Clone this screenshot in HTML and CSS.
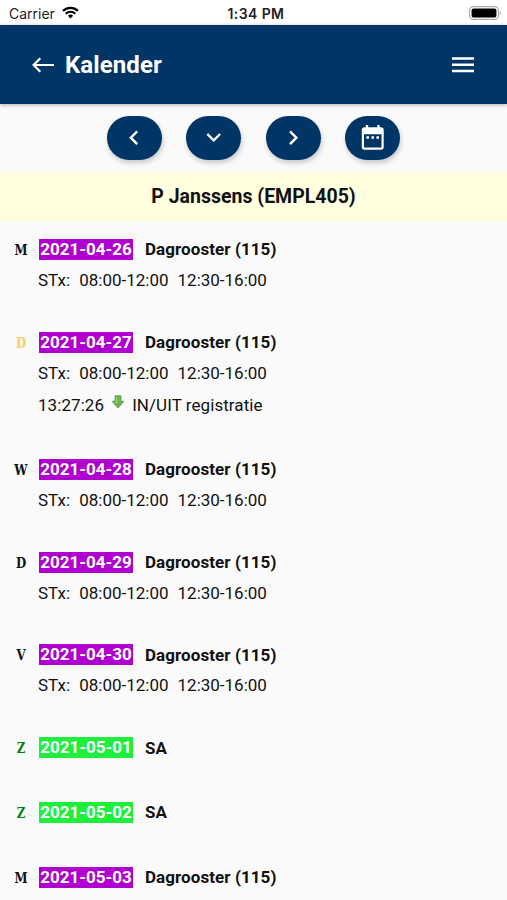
FILE: index.html
```
<!DOCTYPE html>
<html lang="nl">
<head>
    <meta charset="UTF-8">
    <meta name="viewport" content="width=device-width, initial-scale=1.0">
    <title>Kalender</title>
    <link rel="stylesheet" href="styles.css">
</head>
<body>
    <div class="status-bar">
        <div class="carrier">
            <span>Carrier</span>
            <svg class="wifi" viewBox="0 0 17 13" width="17" height="13">
                <path d="M1 4.9a10.8 10.8 0 0 1 15 0M3.7 7.7a6.9 6.9 0 0 1 9.6 0" fill="none" stroke="#000" stroke-width="2.2"/>
                <path d="M8.5 12.6 5.9 9.8a3.8 3.8 0 0 1 5.2 0z"/>
            </svg>
        </div>
        <div class="time">1:34 PM</div>
        <div class="power">
            <svg viewBox="0 0 32 14" width="32" height="14">
                <rect x=".6" y=".6" width="28.8" height="12.8" rx="3.8" fill="#fff" stroke="#aaa" stroke-width="1.1"/>
                <rect x="2.6" y="2.5" width="24.8" height="9" rx="1.8"/>
                <path d="M30.6 5v4q1.2-.7 1.2-2t-1.2-2z" fill="#aaa"/>
            </svg>
        </div>
    </div>

    <header class="toolbar">
        <svg class="back" viewBox="0 0 22 16" width="22" height="16">
            <path d="M22 8H1.6M8.3 1.3 1.6 8l6.7 6.7" fill="none" stroke="#fff" stroke-width="2.2"/>
        </svg>
        <h1>Kalender</h1>
        <svg class="menu" viewBox="0 0 22 16" width="22" height="16">
            <path d="M0 1.6h22M0 7.8h22M0 13.9h22" stroke="#fff" stroke-width="2.5"/>
        </svg>
    </header>

    <nav class="controls">
        <button>
            <svg viewBox="0 0 24 24" width="24" height="24">
                <path d="m15.2 5.3-6.4 6.4 6.4 6.4" fill="none" stroke="#fff" stroke-width="2.4"/>
            </svg>
        </button>
        <button>
            <svg viewBox="0 0 24 24" width="24" height="24">
                <path d="m5.3 8 6.4 6.4L18.1 8" fill="none" stroke="#fff" stroke-width="2.4"/>
            </svg>
        </button>
        <button>
            <svg viewBox="0 0 24 24" width="24" height="24">
                <path d="m9 5.3 6.4 6.4L9 18.1" fill="none" stroke="#fff" stroke-width="2.4"/>
            </svg>
        </button>
        <button>
            <svg viewBox="0 0 24 26" width="24" height="26">
                <path d="M1.9 8v14q0 1.7 1.7 1.7h16.3q1.7 0 1.7-1.7V8" fill="none" stroke="#fff" stroke-width="2.2"/>
                <path d="M3.6 2.2h1.2V0h2.4v2.2h9.1V0h2.4v2.2h1.2q2.8 0 2.8 2.8v4.2H.8V5q0-2.8 2.8-2.8z" fill="#fff"/>
                <path d="M5.4 11.3H8v2.5H5.4zM10.4 11.3H13v2.5h-2.6zM15.4 11.3H18v2.5h-2.6z" fill="#fff"/>
            </svg>
        </button>
    </nav>

    <h2 class="employee">P Janssens (EMPL405)</h2>

    <main class="days">
        <section class="day">
            <div class="head"><span class="letter">M</span><span class="date">2021-04-26</span><span class="roster">Dagrooster (115)</span></div>
            <div class="line"><span>STx:</span><span>08:00-12:00</span><span>12:30-16:00</span></div>
        </section>
        <section class="day today">
            <div class="head"><span class="letter">D</span><span class="date">2021-04-27</span><span class="roster">Dagrooster (115)</span></div>
            <div class="line"><span>STx:</span><span>08:00-12:00</span><span>12:30-16:00</span></div>
            <div class="line registration">
                <span>13:27:26</span>
                <svg viewBox="0 0 14 14" width="14" height="14">
                    <path d="M4 .8h6v5.5h3L7 13 1 6.3h3z" fill="#72b052" stroke="#5c963f" stroke-width=".8"/>
                    <path d="M5.5 2v6" stroke="#a3d184" stroke-width="1.3"/>
                </svg>
                <span>IN/UIT registratie</span>
            </div>
        </section>
        <section class="day">
            <div class="head"><span class="letter">W</span><span class="date">2021-04-28</span><span class="roster">Dagrooster (115)</span></div>
            <div class="line"><span>STx:</span><span>08:00-12:00</span><span>12:30-16:00</span></div>
        </section>
        <section class="day">
            <div class="head"><span class="letter">D</span><span class="date">2021-04-29</span><span class="roster">Dagrooster (115)</span></div>
            <div class="line"><span>STx:</span><span>08:00-12:00</span><span>12:30-16:00</span></div>
        </section>
        <section class="day">
            <div class="head"><span class="letter">V</span><span class="date">2021-04-30</span><span class="roster">Dagrooster (115)</span></div>
            <div class="line"><span>STx:</span><span>08:00-12:00</span><span>12:30-16:00</span></div>
        </section>
        <section class="day weekend">
            <div class="head"><span class="letter">Z</span><span class="date">2021-05-01</span><span class="roster">SA</span></div>
        </section>
        <section class="day weekend">
            <div class="head"><span class="letter">Z</span><span class="date">2021-05-02</span><span class="roster">SA</span></div>
        </section>
        <section class="day">
            <div class="head"><span class="letter">M</span><span class="date">2021-05-03</span><span class="roster">Dagrooster (115)</span></div>
        </section>
    </main>
</body>
</html>
```
FILE: styles.css
```
* {
    box-sizing: border-box;
}
body {
    margin: 0;
    height: 900px;
    overflow: hidden;
    background-color: #fafafa;
    color: #111;
    font-family: Roboto, "Liberation Sans", sans-serif;
}
svg {
    display: block;
    flex: none;
}
.status-bar {
    display: grid;
    grid-template-columns: 1fr auto 1fr;
    align-items: center;
    height: 25px;
    padding: 2px 6px 0 9px;
    background-color: #fff;
    font-family: Inter, sans-serif;
    font-size: 14px;
    color: #222;
}
.carrier {
    display: flex;
    align-items: center;
    gap: 7px;
}
.wifi {
    margin-top: -2px;
}
.time {
    padding-left: 2px;
    font-weight: 600;
    letter-spacing: 0.4px;
}
.power {
    display: flex;
    justify-content: flex-end;
    margin-top: -2px;
}
.toolbar {
    display: flex;
    align-items: center;
    height: 79px;
    padding: 0 33px 0 32px;
    background-color: #003566;
    color: #fff;
    box-shadow: 0 1px 4px rgba(0, 0, 0, 0.3);
}
.toolbar h1 {
    margin: 0 auto 0 11px;
    font-size: 24px;
    font-weight: 700;
    letter-spacing: 0.1px;
}
.controls {
    display: flex;
    justify-content: center;
    gap: 24.5px;
    height: 68px;
    padding-top: 11.5px;
}
.controls button {
    display: flex;
    align-items: center;
    justify-content: center;
    width: 55px;
    height: 44.5px;
    padding: 0;
    border: none;
    border-radius: 23px;
    background-color: #003566;
    box-shadow: 1px 3px 5px rgba(0, 0, 0, 0.2);
}
.employee {
    margin: 0;
    height: 49px;
    line-height: 49px;
    background-color: #ffffe0;
    font-size: 19.5px;
    font-weight: 700;
    text-align: center;
}
.days {
    padding: 11.9px 15px 0;
    font-size: 17px;
}
.day {
    margin-bottom: 31.8px;
}
.head {
    display: flex;
    align-items: center;
    height: 33px;
    font-weight: 700;
}
.letter {
    width: 18px;
    margin: 0 9px 0 -3px;
    font-family: "DejaVu Serif", serif;
    font-size: 15.5px;
    text-align: center;
    transform: scaleX(0.76);
}
.date {
    width: 94px;
    height: 21px;
    line-height: 21px;
    margin-right: 12px;
    background-color: #b000d0;
    color: #fff;
    text-align: center;
}
.roster {
    letter-spacing: 0.07px;
}
.line {
    display: flex;
    align-items: center;
    gap: 9px;
    height: 28px;
    padding-left: 23px;
}
.registration {
    gap: 7px;
    height: 34.3px;
    padding-top: 3px;
    letter-spacing: 0.07px;
}
.registration svg {
    margin-top: -6px;
}
.today .letter {
    color: #ffc866;
}
.weekend .letter {
    color: #087f08;
}
.weekend .date {
    background-color: #1eee3c;
}
```
